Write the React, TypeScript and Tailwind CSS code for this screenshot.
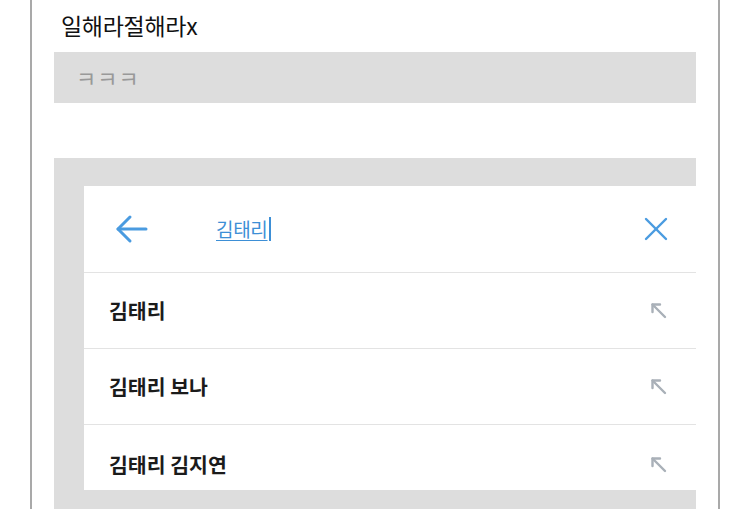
const suggestions = ["김태리", "김태리 보나", "김태리 김지연"];

const BackArrow = () => (
  <svg width="34" height="30" viewBox="0 0 34 30" fill="none" stroke="#4a9be0" strokeWidth="3" strokeLinecap="round" strokeLinejoin="round">
    <path d="M3 15H31" />
    <path d="M15 3L3 15L15 27" />
  </svg>
);

const CloseIcon = () => (
  <svg width="24" height="24" viewBox="0 0 24 24" fill="none" stroke="#4a9be0" strokeWidth="2.4" strokeLinecap="round">
    <path d="M2 2L22 22" />
    <path d="M22 2L2 22" />
  </svg>
);

const FillArrow = () => (
  <svg width="17" height="17" viewBox="0 0 17 17" fill="none" stroke="#a9b0b8" strokeWidth="2.4" strokeLinecap="round" strokeLinejoin="round">
    <path d="M2.5 10V2.5H10" />
    <path d="M2.5 2.5L15 15" />
  </svg>
);

const App = () => {
  return (
    <div className="w-[750px] h-[509px] bg-white overflow-hidden" style={{ fontFamily: '"Noto Sans CJK KR", "Noto Sans", sans-serif' }}>
      <div className="ml-[30px] w-[690px] h-full border-x-2 border-[#a9a9a9] px-[22px]">
        {/* Title */}
        <div className="h-[52px] flex items-center pl-[7px] pb-[2px]">
          <h1 className="text-[23px] text-[#111] tracking-[-0.3px]">일해라절해라x</h1>
        </div>

        {/* Input */}
        <div className="h-[51px] bg-[#dddddd] flex items-center pl-[22px]">
          <span className="text-[22px] text-[#999] tracking-[1px]">ㅋㅋㅋ</span>
        </div>

        <div className="h-[55px]" />

        {/* Search area */}
        <div className="bg-[#dddddd] pt-[28px] pl-[30px] pb-[19px]">
          <div className="bg-white">
            <div className="h-[87px] flex items-center border-b border-[#e3e3e3] pl-[31px] pr-[28px]">
              <BackArrow />
              <div className="ml-[67px] flex-1 flex items-center">
                <span className="text-[19px] text-[#3d8fd6] underline underline-offset-[3px] tracking-[-0.3px]">김태리</span>
                <span className="w-[2px] h-[24px] bg-[#3d8fd6] ml-[1px]" />
              </div>
              <CloseIcon />
            </div>
            {suggestions.map((s, i) => {
              const last = i === suggestions.length - 1;
              return (
                <div
                  key={s}
                  className={`pl-[25px] pr-[29px] ${
                    last ? "h-[65px] pt-[26px]" : "h-[76px] flex items-center border-b border-[#e3e3e3]"
                  }`}
                >
                  <div className="flex-1 flex items-center h-[26px]">
                    <span className="flex-1 text-[20.5px] font-semibold text-[#1b1b1b] tracking-[0px]">{s}</span>
                    <FillArrow />
                  </div>
                </div>
              );
            })}
          </div>
        </div>
      </div>
    </div>
  );
};

export default App;
